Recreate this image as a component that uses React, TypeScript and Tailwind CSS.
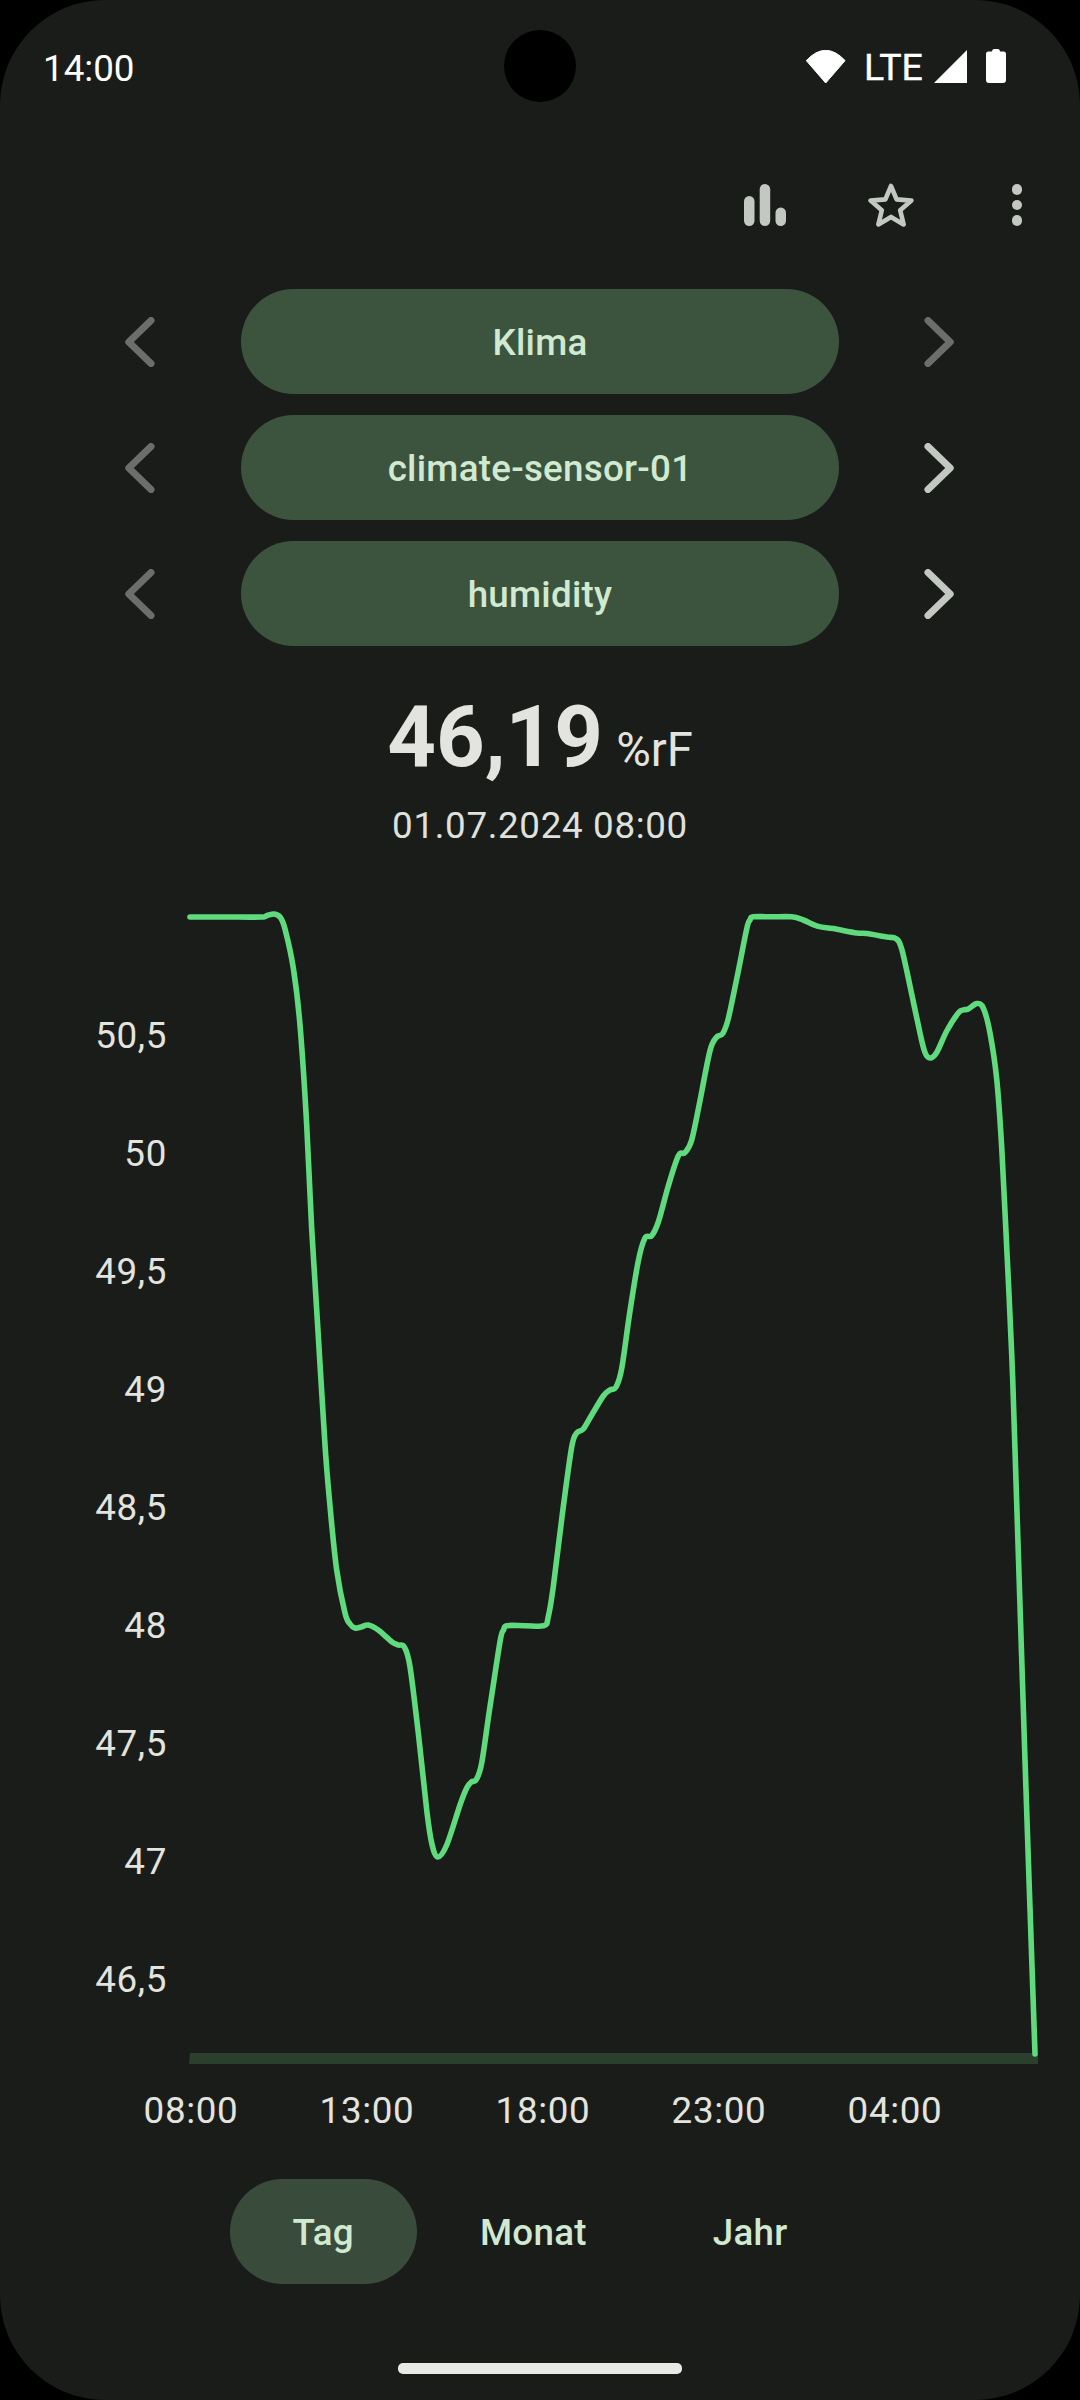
import React from "react";

const pts: [number, number][] = [
  [190,917],[225,917],[261,917],[267,915.5],[274,914],[280,917],[285,929],[293.3,968],[300,1025],[306.7,1125],[311.7,1229],[318.3,1336],[325,1445],
  [330,1506],[336.7,1570],[345,1613],[350,1624],[355,1628],[361,1627],[368.3,1625],[378.3,1630],[391.7,1641.7],[398,1645],[404.3,1647],[410,1666.7],[418.3,1733],[426.7,1810],[431.7,1843],[437.7,1857],[446.7,1845],[460,1805],[466.7,1788],[471.7,1781.7],[476,1780],[481.7,1763],[490,1706.7],[500,1641.7],[503.5,1630],[507,1625.7],[525,1625.7],[544,1625.7],[548.3,1616.7],[553.3,1586.7],[563.3,1506.7],[571.7,1447],[576.7,1433],[583.3,1429],[591.7,1415],[603.3,1396],[610,1390],[616,1387],[621.7,1368.6],[630,1311],[638.3,1261],[645,1238],[651.7,1235.7],[658.3,1222],[668.3,1186],[678.3,1156],[685,1152.5],[691.7,1140],[700,1100.7],[710,1050.7],[716.7,1037],[722.7,1033.6],[728.3,1018.6],[736.7,979],[746.7,929],[750,920],[753.3,916.8],[772,916.8],[791.7,916.8],[803.3,920],[818.3,926.4],[833.3,928.6],[856.7,932.9],[866.7,933.6],[886.7,937],[896,938.6],[901.7,949],[910,986],[920,1033],[925,1052.5],[930,1058],[936.7,1052.5],[946.7,1031],[958.3,1013],[963.3,1010],[968.3,1009],[976.7,1003.6],[983.3,1008],[990,1033],[996.7,1079],[1001.7,1147],[1006.7,1247],[1011.7,1354],[1015,1450],[1025,1760],[1035,2054],
];

function smooth(p: [number, number][]): string {
  let d = `M${p[0][0]} ${p[0][1]}`;
  for (let i = 0; i < p.length - 1; i++) {
    const a = p[Math.max(i - 1, 0)], b = p[i], c = p[i + 1], e = p[Math.min(i + 2, p.length - 1)];
    const c1x = b[0] + (c[0] - a[0]) / 6, c1y = b[1] + (c[1] - a[1]) / 6;
    const c2x = c[0] - (e[0] - b[0]) / 6, c2y = c[1] - (e[1] - b[1]) / 6;
    d += `C${c1x.toFixed(1)} ${c1y.toFixed(1)} ${c2x.toFixed(1)} ${c2y.toFixed(1)} ${c[0]} ${c[1]}`;
  }
  return d;
}

function Chevron({ dir, on }: { dir: "l" | "r"; on?: boolean }) {
  return (
    <button className="w-[126px] h-[105px] flex items-center justify-center">
      <svg viewBox="0 0 30 50" className={dir === "r" ? "w-[30px] h-[50px] -ml-[2px]" : "w-[30px] h-[50px]"} fill="none" stroke={on ? "#c4c8c2" : "#6c6e6b"} strokeWidth="7" strokeLinecap="round" strokeLinejoin="round">
        {dir === "l" ? <path d="M26 3.5 3.8 25 26 46.5" /> : <path d="M4 3.5 26.2 25 4 46.5" />}
      </svg>
    </button>
  );
}

function Selector({ label, right }: { label: string; right?: boolean }) {
  return (
    <div className="flex items-center justify-center gap-[38px]">
      <Chevron dir="l" />
      <div className="w-[598px] h-[105px] pt-[2px] rounded-full bg-[#3c543e] flex items-center justify-center text-[36.75px] font-medium tracking-[0.26px] text-[#d0e9d0]">
        {label}
      </div>
      <Chevron dir="r" on={right} />
    </div>
  );
}

const yLabels = ["50,5", "50", "49,5", "49", "48,5", "48", "47,5", "47", "46,5"];
const xLabels = ["08:00", "13:00", "18:00", "23:00", "04:00"];

export default function App() {
  return (
    <div className="w-[1080px] h-[2400px] bg-black font-['Roboto',sans-serif]">
      <div className="relative w-full h-full rounded-[105px] overflow-hidden bg-[#1a1c1a] flex flex-col">
        <div className="absolute left-[504px] top-[30px] w-[72px] h-[72px] rounded-full bg-black" />

        {/* Status bar */}
        <div className="h-[132px] pl-[43px] pr-[74px] flex items-center justify-between text-white text-[36.75px]">
          <span className="mt-[5px]">14:00</span>
          <div className="flex items-center">
            <svg viewBox="807 49 40 33" className="w-[40px] h-[33px]" fill="#fff">
              <path d="M826.7 82 807.3 59.6Q826.7 39 846.1 59.6Z" stroke="#fff" strokeWidth="1" strokeLinejoin="round" />
            </svg>
            <span className="ml-[18px] mt-[4px] w-[59px] whitespace-nowrap leading-none text-[37.5px] tracking-[0px] [-webkit-text-stroke:0.4px_#fff]">LTE</span>
            <svg viewBox="0 0 33 33" className="ml-[11px] w-[33px] h-[33px]" fill="#fff">
              <path d="M0 33 33 0V33Z" />
            </svg>
            <svg viewBox="0 0 20 34" className="ml-[19px] w-[20px] h-[34px]" fill="#fff">
              <path d="M6 2.5Q6 0 8 0H12Q14 0 14 2.5H17.5Q20 2.5 20 5V31Q20 34 17 34H3Q0 34 0 31V5Q0 2.5 2.5 2.5Z" />
            </svg>
          </div>
        </div>

        {/* Toolbar */}
        <div className="h-[146px] flex items-center justify-end">
          <div className="w-[126px] flex justify-center">
            <svg viewBox="0 0 42 42" className="w-[42px] h-[42px]" fill="#c4c8c2">
              <rect x="0" y="12" width="10.5" height="30" rx="5.25" />
              <rect x="15.7" y="0" width="10.5" height="42" rx="5.25" />
              <rect x="31.5" y="23.5" width="10.5" height="18.5" rx="5.25" />
            </svg>
          </div>
          <div className="w-[126px] flex justify-center">
            <svg viewBox="0 0 46 44" className="w-[46px] h-[44px]" fill="none" stroke="#c4c8c2" strokeWidth="4.6" strokeLinejoin="round">
              <path d="M23 3 28.6 16.4 43.4 17.6 32.2 27.2 35.6 41.4 23 33.9 10.4 41.4 13.8 27.2 2.6 17.6 17.4 16.4Z" />
            </svg>
          </div>
          <div className="w-[126px] flex flex-col items-center gap-[5px]">
            <div className="w-[10.6px] h-[10.6px] rounded-full bg-[#c4c8c2]" />
            <div className="w-[10.6px] h-[10.6px] rounded-full bg-[#c4c8c2]" />
            <div className="w-[10.6px] h-[10.6px] rounded-full bg-[#c4c8c2]" />
          </div>
        </div>

        {/* Selectors */}
        <div className="mt-[11px] flex flex-col gap-[21px]">
          <Selector label="Klima" />
          <Selector label="climate-sensor-01" right />
          <Selector label="humidity" right />
        </div>

        {/* Value */}
        <div className="mt-[42px] flex items-baseline justify-center gap-[13px] h-[98px] text-[#e3e4df]">
          <span className="text-[85px] leading-[98px] font-bold">46,19</span>
          <span className="text-[47.25px] leading-[98px]">%rF</span>
        </div>
        <div className="mt-[19px] h-[42px] leading-[42px] text-center text-[36.75px] tracking-[0.66px] text-[#dfe1dc]">
          01.07.2024 08:00
        </div>

        {/* Chart */}
        <div className="flex h-[1223px]">
          <div className="w-[167px] pt-[130px] flex flex-col items-end text-[36.75px] tracking-[0.66px] text-[#e3e4df]">
            {yLabels.map((l) => (
              <div key={l} className="h-[118px] flex items-center shrink-0">{l}</div>
            ))}
          </div>
          <svg viewBox="167 847 873 1223" className="w-[873px] h-[1223px]" fill="none">
            <path d="M190 2053H1038V2064H189Z" fill="#2b3f2d" />
            <path d={smooth(pts)} stroke="#5fdb7e" strokeWidth="5.6" strokeLinecap="round" strokeLinejoin="round" />
          </svg>
        </div>

        {/* Time axis */}
        <div className="h-[80px] pt-[2px] pl-[103px] flex items-center text-[36.75px] tracking-[0.66px] text-[#e3e4df]">
          {xLabels.map((l) => (
            <div key={l} className="w-[176px] text-center">{l}</div>
          ))}
        </div>

        {/* Range tabs */}
        <div className="mt-[29px] flex justify-center text-[36.75px] font-medium tracking-[0.26px] text-[#d0e9d0]">
          <div className="h-[105px] pt-[2px] px-[63px] rounded-full bg-[#394b3a] flex items-center">Tag</div>
          <div className="h-[105px] pt-[2px] px-[63px] flex items-center">Monat</div>
          <div className="h-[105px] pt-[2px] px-[63px] flex items-center">Jahr</div>
        </div>

        {/* Home indicator */}
        <div className="mt-[79px] self-center w-[284px] h-[11px] rounded-[5px] bg-[#e8eae6]" />
      </div>
    </div>
  );
}
